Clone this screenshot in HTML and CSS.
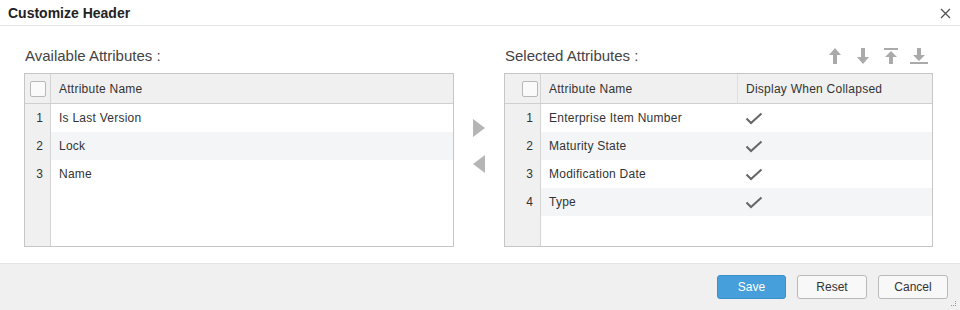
FILE: index.html
```html
<!DOCTYPE html>
<html>
<head>
  <title>Customize Header</title>
  <link rel="stylesheet" href="styles.css">
</head>
<body>
  <div class="dialog">
    <div class="dialog-header">
      <span class="dialog-title">Customize Header</span>
      <span class="close-btn">
        <svg width="11" height="11" viewBox="0 0 11 11"><path d="M1 1 L10 10 M10 1 L1 10" stroke="#555" stroke-width="1.3" fill="none"/></svg>
      </span>
    </div>

    <div class="dialog-body">
      <!-- available list -->
      <div class="panel panel-left">
        <div class="panel-head">
          <span class="panel-label">Available Attributes :</span>
        </div>
        <div class="grid grid-left">
          <table>
            <thead>
              <tr>
                <th class="num"><span class="checkbox"></span></th>
                <th>Attribute Name</th>
              </tr>
            </thead>
            <tbody>
              <tr><td class="num">1</td><td>Is Last Version</td></tr>
              <tr class="alt"><td class="num">2</td><td>Lock</td></tr>
              <tr><td class="num">3</td><td>Name</td></tr>
            </tbody>
          </table>
        </div>
      </div>

      <!-- move buttons -->
      <div class="transfer">
        <svg width="14" height="18" viewBox="0 0 14 18"><polygon points="1,0 13,9 1,18" fill="#b5b5b5"/></svg>
        <svg width="14" height="18" viewBox="0 0 14 18"><polygon points="13,0 1,9 13,18" fill="#b5b5b5"/></svg>
      </div>

      <!-- selected list -->
      <div class="panel panel-right">
        <div class="panel-head">
          <span class="panel-label">Selected Attributes :</span>
          <div class="order-tools">
            <svg width="18" height="18" viewBox="0 0 18 18"><polygon points="9,1 15,8 11,8 11,17 7,17 7,8 3,8" fill="#aaa"/></svg>
            <svg width="18" height="18" viewBox="0 0 18 18"><polygon points="9,17 15,10 11,10 11,1 7,1 7,10 3,10" fill="#aaa"/></svg>
            <svg width="18" height="18" viewBox="0 0 18 18"><rect x="2" y="1" width="14" height="2" fill="#aaa"/><polygon points="9,4 15,10 11,10 11,17 7,17 7,10 3,10" fill="#aaa"/></svg>
            <svg width="18" height="18" viewBox="0 0 18 18"><rect x="0" y="15" width="18" height="2" fill="#aaa"/><polygon points="9,14 15,8 11,8 11,1 7,1 7,8 3,8" fill="#aaa"/></svg>
          </div>
        </div>
        <div class="grid grid-right">
          <table>
            <thead>
              <tr>
                <th class="num"><span class="checkbox"></span></th>
                <th class="name-col">Attribute Name</th>
                <th>Display When Collapsed</th>
              </tr>
            </thead>
            <tbody>
              <tr><td class="num">1</td><td>Enterprise Item Number</td><td><svg class="check" width="18" height="13" viewBox="0 0 18 13"><path d="M1.5 6.5 L6 11 L16.5 1.5" stroke="#666" stroke-width="2" fill="none"/></svg></td></tr>
              <tr class="alt"><td class="num">2</td><td>Maturity State</td><td><svg class="check" width="18" height="13" viewBox="0 0 18 13"><path d="M1.5 6.5 L6 11 L16.5 1.5" stroke="#666" stroke-width="2" fill="none"/></svg></td></tr>
              <tr><td class="num">3</td><td>Modification Date</td><td><svg class="check" width="18" height="13" viewBox="0 0 18 13"><path d="M1.5 6.5 L6 11 L16.5 1.5" stroke="#666" stroke-width="2" fill="none"/></svg></td></tr>
              <tr class="alt"><td class="num">4</td><td>Type</td><td><svg class="check" width="18" height="13" viewBox="0 0 18 13"><path d="M1.5 6.5 L6 11 L16.5 1.5" stroke="#666" stroke-width="2" fill="none"/></svg></td></tr>
            </tbody>
          </table>
        </div>
      </div>
    </div>

    <div class="dialog-footer">
      <button class="btn btn-primary">Save</button>
      <button class="btn">Reset</button>
      <button class="btn">Cancel</button>
      <svg class="grip" width="6" height="6" viewBox="0 0 6 6"><rect x="4" y="0" width="1" height="1" fill="#999"/><rect x="4" y="2" width="1" height="1" fill="#999"/><rect x="4" y="4" width="1" height="1" fill="#999"/><rect x="2" y="4" width="1" height="1" fill="#999"/><rect x="0" y="4" width="1" height="1" fill="#999"/></svg>
    </div>
  </div>
</body>
</html>
```

FILE: styles.css
```css
body {
  margin: 0;
  font-family: "Liberation Sans", Arial, sans-serif;
  font-size: 12px;
  color: #333;
  background: #fff;
}

.dialog {
  position: relative;
  width: 960px;
  height: 310px;
  display: flex;
  flex-direction: column;
  box-sizing: border-box;
}

/* Header */
.dialog-header {
  height: 25px;
  border-bottom: 1px solid #e4e4e4;
  display: flex;
  align-items: center;
  justify-content: space-between;
  padding: 0 9px 0 8px;
  flex-shrink: 0;
}

.dialog-title {
  font-size: 14px;
  font-weight: bold;
  color: #222;
}

.close-btn {
  display: flex;
  margin-top: 1px;
}

/* Body */
.dialog-body {
  flex: 1;
  display: flex;
  padding: 16px 27px 16px 24px;
  box-sizing: border-box;
}

.panel {
  display: flex;
  flex-direction: column;
}

.panel-left {
  width: 430px;
}

.panel-right {
  width: 429px;
}

.panel-head {
  height: 26px;
  margin-bottom: 5px;
  display: flex;
  align-items: center;
  justify-content: space-between;
}

.panel-label {
  font-size: 15px;
  color: #444;
  padding-left: 1px;
}

.order-tools {
  display: flex;
  gap: 10px;
  margin-right: 5px;
  margin-top: 2px;
}

.transfer {
  width: 50px;
  display: flex;
  flex-direction: column;
  align-items: center;
  gap: 18px;
  padding-top: 77px;
  box-sizing: border-box;
}

/* Grids */
.grid {
  height: 174px;
  box-sizing: border-box;
  border: 1px solid #c6c6c6;
}

.grid-left {
  background: linear-gradient(to right, #f0f0f0 0, #f0f0f0 25px, #d4d4d4 25px, #d4d4d4 26px, #fff 26px);
}

.grid-right {
  background: linear-gradient(to right, #f0f0f0 0, #f0f0f0 35px, #d4d4d4 35px, #d4d4d4 36px, #fff 36px);
}

table {
  width: 100%;
  border-collapse: separate;
  border-spacing: 0;
  table-layout: fixed;
}

th {
  height: 29px;
  padding: 0 0 0 8px;
  background: #f0f0f0;
  border-bottom: 1px solid #cfcfcf;
  font-weight: normal;
  text-align: left;
  color: #333;
  letter-spacing: 0.25px;
}

td {
  height: 28px;
  padding: 0 0 0 8px;
  color: #333;
  letter-spacing: 0.25px;
}

th.num,
td.num {
  box-sizing: border-box;
  width: 26px;
  padding: 0 7px 0 0;
  text-align: right;
  border-right: 1px solid #d4d4d4;
  letter-spacing: 0;
}

th.num {
  padding-right: 4px;
}

.grid-right th.num,
.grid-right td.num {
  width: 36px;
}

.grid-right th.num {
  padding-right: 2px;
}

th.name-col {
  box-sizing: border-box;
  width: 197px;
  border-right: 1px solid #dedede;
}

tr.alt td:not(.num) {
  background: #f4f5f6;
}

.checkbox {
  display: inline-block;
  width: 16px;
  height: 16px;
  box-sizing: border-box;
  border: 1px solid #b8b8b8;
  border-radius: 2px;
  background: #fafafa;
  vertical-align: middle;
}

.check {
  display: block;
  margin-left: -1px;
}

/* Footer */
.dialog-footer {
  height: 47px;
  box-sizing: border-box;
  border-top: 1px solid #e4e4e4;
  background: #f0f0f0;
  display: flex;
  justify-content: flex-end;
  align-items: flex-start;
  gap: 11px;
  padding: 11px 12px 0 0;
  flex-shrink: 0;
}

.btn {
  width: 70px;
  height: 24px;
  font-family: "Liberation Sans", Arial, sans-serif;
  font-size: 12px;
  color: #333;
  background: #f8f8f8;
  border: 1px solid #b9b9b9;
  border-radius: 3px;
  padding: 0;
}

.btn-primary {
  width: 69px;
  background: #469fdb;
  border-color: #3a90cb;
  color: #fff;
}

.grip {
  position: absolute;
  right: 3px;
  bottom: 3px;
}
```
